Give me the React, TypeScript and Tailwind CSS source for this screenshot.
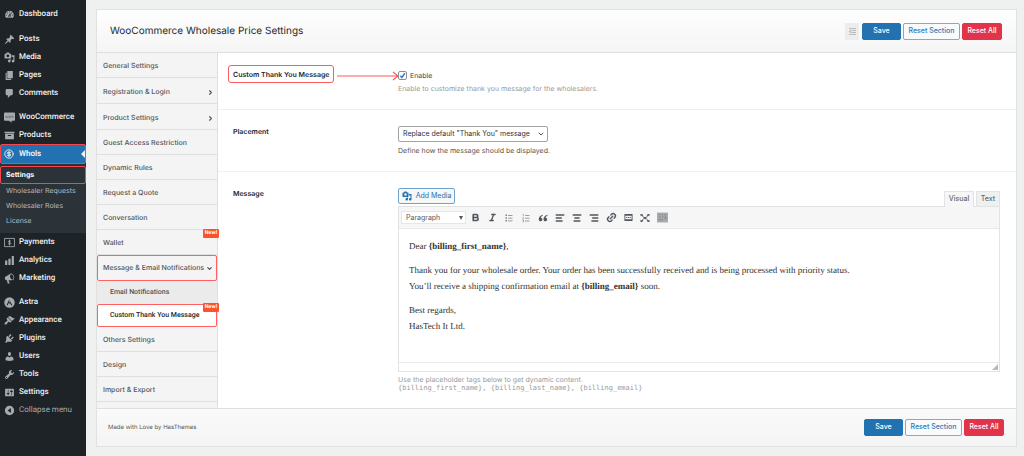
import React, { useState } from "react";
import {
  AlignCenter,
  AlignLeft,
  AlignRight,
  Bold,
  ChevronDown,
  ChevronRight,
  CircleDollarSign,
  Italic,
  Link2,
} from "lucide-react";

type IconProps = { className?: string };

function Glyph({ d, className = "size-[11px]" }: { d: string; className?: string }) {
  return (
    <svg viewBox="0 0 20 20" fill="currentColor" fillRule="evenodd" aria-hidden="true" className={className}>
      <path d={d} />
    </svg>
  );
}

const paths = {
  dashboard:
    "M3.76 16h12.48A7.998 7.998 0 0 0 10 3a7.998 7.998 0 0 0-6.24 13zM10 4c.55 0 1 .45 1 1s-.45 1-1 1-1-.45-1-1 .45-1 1-1zM6 6c.55 0 1 .45 1 1s-.45 1-1 1-1-.45-1-1 .45-1 1-1zm8 0c.55 0 1 .45 1 1s-.45 1-1 1-1-.45-1-1 .45-1 1-1zm-5.37 5.55L12 7v6c0 1.1-.9 2-2 2s-2-.9-2-2c0-.57.24-1.08.63-1.45zM4 10c.55 0 1 .45 1 1s-.45 1-1 1-1-.45-1-1 .45-1 1-1zm12 0c.55 0 1 .45 1 1s-.45 1-1 1-1-.45-1-1 .45-1 1-1zm-5 3c0-.55-.45-1-1-1s-1 .45-1 1 .45 1 1 1 1-.45 1-1z",
  post: "M10.44 3.02l1.82-1.82 6.36 6.35-1.83 1.82c-1.05-.68-2.48-.57-3.41.36l-.75.75c-.92.93-1.04 2.35-.35 3.41l-1.83 1.82-2.41-2.41-2.8 2.79c-.42.42-3.38 2.71-3.8 2.29s1.86-3.39 2.28-3.81l2.79-2.79L4.1 9.36l1.83-1.82c1.05.69 2.48.57 3.4-.36l.75-.75c.93-.92 1.05-2.35.36-3.41z",
  media:
    "M13 11V4c0-.55-.45-1-1-1h-1.67L9 1H5L3.67 3H2c-.55 0-1 .45-1 1v7c0 .55.45 1 1 1h10c.55 0 1-.45 1-1zM7 4.5c1.38 0 2.5 1.12 2.5 2.5S8.38 9.5 7 9.5 4.5 8.38 4.5 7 5.62 4.5 7 4.5zM14 6h5v10.5c0 1.38-1.12 2.5-2.5 2.5S14 17.88 14 16.5s1.12-2.5 2.5-2.5c.17 0 .34.02.5.05V9h-3V6zm-4 8.05V13h2v3.5c0 1.38-1.12 2.5-2.5 2.5S7 17.88 7 16.5 8.12 14 9.5 14c.17 0 .34.02.5.05z",
  page: "M6 15V2h10v13H6zm-1 1h8v2H3V5h2v11z",
  comments: "M5 2h9c1.1 0 2 .9 2 2v7c0 1.1-.9 2-2 2h-2l-5 5v-5H5c-1.1 0-2-.9-2-2V4c0-1.1.9-2 2-2z",
  products: "M19 3v3H1V3h18zM2 7h16v10H2V7zm11 4V9H7v2h6z",
  chart: "M18 18V2h-4v16h4zm-6 0V7H8v11h4zm-6 0v-8H2v8h4z",
  megaphone:
    "M18.15 5.94c.46 1.62.38 3.22-.02 4.48-.42 1.28-1.26 2.18-2.3 2.48-.3.08-.7.1-1.02.1H8.2l2.02 5.5c.02.14-.06.26-.14.34-.08.1-.24.16-.34.16H6.95c-.1 0-.26-.06-.34-.16-.08-.08-.16-.2-.14-.34l-1-5.5H4.25c-.5.04-1.1-.2-1.56-.64s-.88-1.08-1.06-1.88c-.24-.8-.2-1.56-.02-2.2.18-.62.58-1.08 1.06-1.3l9.02-5.42c.3-.2.6-.36.98-.46 1.04-.3 2.24.1 3.22.98s1.84 2.24 2.26 3.86zM15.4 11.9c1.3-.4 2-1.9 1.9-3.7-.1-3-2.2-6-4.3-5.9-1.4.2-2.2 2.1-1.9 4.5.4 3 2.500 5.500 4.300 5.100z",
  appearance:
    "M14.48 11.06L7.41 3.99l1.5-1.5c.5-.56 2.3-.47 3.51.32 1.21.8 1.43 1.28 2.91 2.1 1.18.64 2.45 1.26 4.45.85zm-.71.71L6.7 4.7 4.93 6.47c-.39.39-.39 1.02 0 1.41l1.06 1.06c.39.39.39 1.03 0 1.42-.6.6-1.43 1.11-2.21 1.69-.35.26-.7.53-1.01.84C1.43 14.23.4 16.08 1.4 17.07c.99 1 2.84-.03 4.18-1.36.31-.31.58-.66.85-1.02.57-.78 1.08-1.61 1.69-2.21.39-.39 1.02-.39 1.41 0l1.06 1.06c.39.39 1.02.39 1.41 0z",
  plugins:
    "M13.11 4.36L9.87 7.6 8 5.73l3.24-3.24c.35-.34 1.05-.2 1.56.32.52.51.66 1.21.31 1.55zm-8 1.77l.91-1.12 9.01 9.01-1.19.84c-.71.71-2.63 1.16-3.82 1.16H6.14L4.9 17.26c-.59.59-1.54.59-2.12 0-.59-.58-.59-1.53 0-2.12l1.24-1.24v-3.88c0-1.13.4-3.19 1.09-3.89zm7.26 3.97l3.24-3.24c.34-.35 1.04-.21 1.55.31.52.51.66 1.21.31 1.55l-3.24 3.25z",
  users:
    "M10 9.25c-2.27 0-2.73-3.44-2.73-3.44C7 4.02 7.82 2 9.97 2c2.16 0 2.98 2.02 2.71 3.81 0 0-.41 3.44-2.68 3.44zm0 2.57L12.72 10c2.39 0 4.52 2.33 4.52 4.53v2.49s-3.65 1.13-7.24 1.13c-3.65 0-7.24-1.13-7.24-1.13v-2.49c0-2.25 1.94-4.48 4.47-4.48z",
  tools:
    "M16.68 9.77c-1.34 1.34-3.3 1.67-4.95.99l-5.41 6.52c-.99.99-2.59.99-3.58 0s-.99-2.59 0-3.57l6.52-5.42c-.68-1.65-.35-3.61.99-4.95 1.28-1.28 3.12-1.62 4.72-1.06l-2.89 2.89 2.82 2.82 2.86-2.87c.53 1.58.18 3.39-1.08 4.65zM3.81 16.21c.4.39 1.04.39 1.43 0 .4-.4.4-1.04 0-1.43-.39-.4-1.03-.4-1.43 0-.39.39-.39 1.03 0 1.43z",
  settings:
    "M18 16V4c0-.55-.45-1-1-1H3c-.55 0-1 .45-1 1v12c0 .55.45 1 1 1h14c.55 0 1-.45 1-1zM8 11h1c.55 0 1 .45 1 1s-.45 1-1 1H8v1.5c0 .28-.22.5-.5.5s-.5-.22-.5-.5V13H6c-.55 0-1-.45-1-1s.45-1 1-1h1V5.5c0-.28.22-.5.5-.5s.5.22.5.5V11zm5-2h-1c-.55 0-1-.45-1-1s.45-1 1-1h1V5.5c0-.28.22-.5.5-.5s.5.22.5.5V7h1c.55 0 1 .45 1 1s-.45 1-1 1h-1v5.5c0 .28-.22.5-.5.5s-.5-.22-.5-.5V9z",
  collapse: "M10 1.500a8.500 8.500 0 1 0 0 17 8.500 8.500 0 0 0 0-17zM12.500 5.500v9L6.500 10z",
};

function WooIcon() {
  return (
    <svg viewBox="0 0 20 20" aria-hidden="true" className="size-[11px]">
      <path fill="currentColor" d="M1.500 1h17c.8 0 1.500.7 1.500 1.500v12c0 .8-.7 1.500-1.500 1.500h-5l.8 3.500L9 16H1.500C.7 16 0 15.300 0 14.500v-12C0 1.700.7 1 1.500 1z" />
      <path fill="none" stroke="#55595d" strokeWidth="1" d="M3 7l1 3.500L5.500 8l1.500 2.500 1-3.500M9.800 8.700a1.300 1.700 0 1 0 2.600 0 1.300 1.700 0 1 0-2.600 0M14.300 8.700a1.300 1.700 0 1 0 2.600 0 1.300 1.700 0 1 0-2.600 0" />
    </svg>
  );
}

function PaymentsIcon() {
  return (
    <svg viewBox="0 0 20 20" fill="none" stroke="currentColor" aria-hidden="true" className="size-[11px]">
      <path strokeWidth="1.600" d="M1 2.500h18v15H1z" />
      <path strokeWidth="1.600" d="M12.500 7.800C12 6.800 8 6.500 8 8.500s4.300 1 4.300 3.200-4 2-4.800.4M10 5v10" />
    </svg>
  );
}

function AstraIcon() {
  return (
    <svg viewBox="0 0 20 20" aria-hidden="true" className="size-[11px]">
      <circle cx="10" cy="10" r="9.500" fill="currentColor" />
      <path fill="#1d2327" d="M9.500 4.500L4.500 15h2l3.300-7zM10.800 7.500l-2 4.200 2.600 0L13 15h2.300z" />
    </svg>
  );
}

const g = (d: string) => <Glyph d={d} />;

function MenuItem({ icon, label, muted = false }: { icon: React.ReactNode; label: string; muted?: boolean }) {
  return (
    <li>
      <a href="#" className={`flex h-[18px] items-center gap-1 pl-[3px] ${muted ? "text-[#a7aaad]" : "font-medium text-[#f0f0f1]"}`}>
        <span className="flex w-[12px] shrink-0 justify-center text-[#a7aaad]">{icon}</span>
        {label}
      </a>
    </li>
  );
}

function Sidebar() {
  return (
    <aside className="w-[86px] shrink-0 bg-[#1d2327] pt-[5px] font-['Roboto','Liberation_Sans',sans-serif] text-[8px] leading-[10px]">
      <nav aria-label="Admin menu">
        <ul>
          <MenuItem icon={g(paths.dashboard)} label="Dashboard" />
        </ul>
        <ul className="mt-[7px]">
          <MenuItem icon={g(paths.post)} label="Posts" />
          <MenuItem icon={g(paths.media)} label="Media" />
          <MenuItem icon={g(paths.page)} label="Pages" />
          <MenuItem icon={g(paths.comments)} label="Comments" />
        </ul>
        <ul className="mt-1.5">
          <MenuItem icon={<WooIcon />} label="WooCommerce" />
          <MenuItem icon={g(paths.products)} label="Products" />
          <li>
            <a
              href="#"
              className="relative flex h-5 items-center gap-1 rounded-[2px] border border-[#f2474d] bg-[#2271b1] pl-[2px] font-medium text-white"
            >
              <span className="flex w-[12px] shrink-0 justify-center">
                <CircleDollarSign className="size-[10px]" strokeWidth={2} />
              </span>
              Whols
              <svg viewBox="0 0 4 8" aria-hidden="true" className="absolute top-[5px] right-0 h-2 w-1">
                <path d="M4 0v8L0 4z" fill="#f0f0f1" />
              </svg>
            </a>
            <ul className="bg-[#2c3338] pt-[2px] pb-1 font-['Inter','Liberation_Sans',sans-serif] text-[7px] text-[#b4b9be]">
              <li>
                <a href="#" className="flex h-[18px] items-center rounded-[2px] border border-[#f2474d] pl-[5px] font-bold text-white">
                  Settings
                </a>
              </li>
              {["Wholesaler Requests", "Wholesaler Roles", "License"].map((t) => (
                <li key={t}>
                  <a href="#" className="flex h-[15px] items-center pb-[2px] pl-1.5">
                    {t}
                  </a>
                </li>
              ))}
            </ul>
          </li>
          <MenuItem icon={<PaymentsIcon />} label="Payments" />
          <MenuItem icon={g(paths.chart)} label="Analytics" />
          <MenuItem icon={g(paths.megaphone)} label="Marketing" />
        </ul>
        <ul className="mt-1.5">
          <MenuItem icon={<AstraIcon />} label="Astra" />
          <MenuItem icon={g(paths.appearance)} label="Appearance" />
          <MenuItem icon={g(paths.plugins)} label="Plugins" />
          <MenuItem icon={g(paths.users)} label="Users" />
          <MenuItem icon={g(paths.tools)} label="Tools" />
          <MenuItem icon={g(paths.settings)} label="Settings" />
          <MenuItem icon={g(paths.collapse)} label="Collapse menu" muted />
        </ul>
      </nav>
    </aside>
  );
}

function Actions() {
  return (
    <div className="flex gap-0.5 text-[7px] font-medium">
      <button type="button" className="h-[17px] w-[39px] rounded-[2px] border border-[#2271b1] bg-[#2271b1] text-white">
        Save
      </button>
      <button type="button" className="h-[17px] w-[57px] rounded-[2px] border border-[#7fabd0] bg-[#f8fafc] whitespace-nowrap text-[#2f79b5]">
        Reset Section
      </button>
      <button type="button" className="h-[17px] w-10 rounded-[2px] border border-[#e1344a] bg-[#e1344a] whitespace-nowrap text-white">
        Reset All
      </button>
    </div>
  );
}

function NewBadge() {
  return (
    <span className="absolute -top-px -right-[2px] flex h-[9px] w-4 items-center justify-center rounded-[1px] bg-[#fb5429] text-[5px] font-bold text-white">
      New!
    </span>
  );
}

function NavRow({ label, open, arrow, badge }: { label: string; open?: boolean; arrow?: boolean; badge?: boolean }) {
  const tall = arrow || open ? "h-[26px]" : "h-[25px]";
  const edge = open ? "rounded-[2px] border border-[#ff6163] pt-px pl-[5px]" : "border-b border-[#dfdfdf] pt-[3px] pl-1.5";
  return (
    <li className="relative">
      <a href="#" className={`flex items-center justify-between pr-[3px] whitespace-nowrap ${tall} ${edge}`}>
        {label}
        {arrow && <ChevronRight className="size-[7px]" strokeWidth={4} />}
        {open && <ChevronDown className="size-[7px]" strokeWidth={4} />}
      </a>
      {badge && <NewBadge />}
    </li>
  );
}

function SectionNav() {
  return (
    <nav aria-label="Sections" className="w-[121px] shrink-0 border-r border-[#dfdfdf] bg-[#f4f4f4] text-[7px] font-medium text-[#50555a]">
      <ul>
        <NavRow label="General Settings" />
        <NavRow label="Registration & Login" arrow />
        <NavRow label="Product Settings" arrow />
        <NavRow label="Guest Access Restriction" />
        <NavRow label="Dynamic Rules" />
        <NavRow label="Request a Quote" />
        <NavRow label="Conversation" />
        <NavRow label="Wallet" badge />
        <NavRow label="Message & Email Notifications" open />
        <li>
          <a href="#" className="flex h-[23px] items-center bg-[#ebebeb] pl-[13px] font-['Roboto','Liberation_Sans',sans-serif]">
            Email Notifications
          </a>
        </li>
        <li className="relative">
          <a
            href="#"
            className="flex h-[23px] items-center rounded-[2px] border border-[#ff6163] bg-white pl-3 font-['Roboto','Liberation_Sans',sans-serif] whitespace-nowrap text-[#23282d]"
          >
            Custom Thank You Message
          </a>
          <NewBadge />
        </li>
        <NavRow label="Others Settings" />
        <NavRow label="Design" />
        <NavRow label="Import & Export" />
      </ul>
    </nav>
  );
}

function ListIcon({ className }: IconProps) {
  return (
    <svg viewBox="0 0 20 20" fill="currentColor" aria-hidden="true" className={className}>
      <path d="M3 3h3v3H3zM8 4h9v1.500H8zM3 8.500h3v3H3zM8 9.500h9V11H8zM3 14h3v3H3zM8 15h9v1.500H8z" />
    </svg>
  );
}

function NumberedIcon({ className }: IconProps) {
  return (
    <svg viewBox="0 0 20 20" fill="none" stroke="currentColor" aria-hidden="true" className={className}>
      <path strokeWidth="1.500" d="M8 5h9M8 10.500h9M8 16h9" />
      <path strokeWidth="1.100" d="M3.500 2.800L4.500 2v4.500M3 9h2v1.300L3 12h2.300M3 14h2v4H3M3.500 16H5" />
    </svg>
  );
}

function QuoteIcon({ className }: IconProps) {
  return (
    <Glyph
      className={className}
      d="M9.300 3.500C4.500 5 1.500 8.500 1.500 12.300c0 2.500 1.500 4.200 3.800 4.200 2 0 3.500-1.500 3.500-3.500S7.500 9.700 5.700 9.500c.3-1.800 1.700-3.300 4-4.500zM18.800 3.500c-4.800 1.500-7.800 5-7.800 8.800 0 2.500 1.500 4.200 3.800 4.200 2 0 3.500-1.500 3.500-3.500S17 9.700 15.200 9.500c.3-1.800 1.700-3.300 4-4.500z"
    />
  );
}

function MoreIcon({ className }: IconProps) {
  return <Glyph className={className} d="M1 2h18v4H1zM1 14h18v4H1zM1 6h2v8H1zM17 6h2v8h-2zM5 9h2.500v2H5zM8.800 9h2.500v2H8.800zM12.500 9H15v2h-2.500z" />;
}

function FullscreenIcon({ className }: IconProps) {
  return (
    <svg viewBox="0 0 20 20" fill="currentColor" aria-hidden="true" className={className}>
      <path d="M1 2h5L4.500 3.500l3 3L6 8 3 5 1 7zM19 2v5l-2-2-3 3-1.500-1.500 3-3L14 2zM1 18v-5l2 2 3-3 1.500 1.500-3 3L6 18zM19 18h-5l1.500-1.500-3-3L14 12l3 3 2-2zM7 8h6v4H7z" />
    </svg>
  );
}

function KitchenSinkIcon({ className }: IconProps) {
  return (
    <svg viewBox="0 0 20 20" aria-hidden="true" className={className}>
      <rect x="0" y="1" width="20" height="18" fill="#a9abad" />
      <path fill="#85898c" d="M3 4h3v2H3zM8 4h3v2H8zM13 4h4v2h-4zM3 8h4v2H3zM9 8h3v2H9zM14 8h3v5h-3zM3 13h8v2H3z" />
    </svg>
  );
}

const tools: { label: string; icon: React.ReactNode }[] = [
  { label: "Bold", icon: <Bold className="size-[9px]" strokeWidth={4.5} /> },
  { label: "Italic", icon: <Italic className="size-[9px]" strokeWidth={3.5} /> },
  { label: "Bulleted list", icon: <ListIcon className="size-[10px] text-[#7e8185]" /> },
  { label: "Numbered list", icon: <NumberedIcon className="size-[10px] text-[#7e8185]" /> },
  { label: "Blockquote", icon: <QuoteIcon className="size-[10px]" /> },
  { label: "Align left", icon: <AlignLeft className="size-[10px]" strokeWidth={3.5} /> },
  { label: "Align center", icon: <AlignCenter className="size-[10px]" strokeWidth={3.5} /> },
  { label: "Align right", icon: <AlignRight className="size-[10px]" strokeWidth={3.5} /> },
  { label: "Insert link", icon: <Link2 className="size-[11px] -rotate-45" strokeWidth={3} /> },
  { label: "Read more", icon: <MoreIcon className="size-[9px]" /> },
  { label: "Fullscreen", icon: <FullscreenIcon className="size-[10px]" /> },
  { label: "Toolbar toggle", icon: <KitchenSinkIcon className="size-[11px]" /> },
];

function Editor() {
  return (
    <div>
      <div className="flex items-end justify-between">
        <button
          type="button"
          className="mb-[2px] flex h-4 w-[57px] items-center justify-center gap-1 rounded-[2px] border border-[#6ea3cd] bg-[#f6f7f7] text-[7px] whitespace-nowrap text-[#2271b1]"
        >
          <Glyph d={paths.media} className="size-[10px] shrink-0" />
          Add Media
        </button>
        <div role="tablist" className="z-10 -mb-px flex gap-0.5 text-[7px] font-medium text-[#646970]">
          <button role="tab" type="button" aria-selected="true" className="h-4 w-[30px] border border-b-0 border-[#e2e3e5] bg-[#f6f6f6]">
            Visual
          </button>
          <button role="tab" type="button" aria-selected="false" className="h-4 w-6 border border-[#e2e3e5] bg-[#eff0f1]">
            Text
          </button>
        </div>
      </div>
      <div className="border border-[#e2e3e5] bg-white">
        <div className="flex h-[22px] items-center border-b border-[#e8e9ea] bg-[#f6f6f6] pl-[2px]">
          <div className="relative mr-[2px]">
            <select
              aria-label="Block format"
              className="block h-[13px] w-[65px] appearance-none border border-[#e6e6e6] bg-white pl-1 text-[7px] leading-[10px] text-[#595959]"
            >
              <option>Paragraph</option>
            </select>
            <svg viewBox="0 0 4 4" aria-hidden="true" className="pointer-events-none absolute top-[5px] right-[3px] size-1 fill-[#50575e]">
              <path d="M0 0h4L2 4z" />
            </svg>
          </div>
          <div className="flex gap-[3px] text-[#50575e]">
            {tools.map((t) => (
              <button key={t.label} type="button" aria-label={t.label} className="flex h-[14px] w-[14px] items-center justify-center">
                {t.icon}
              </button>
            ))}
          </div>
        </div>
        <div
          role="textbox"
          aria-label="Message"
          aria-multiline="true"
          contentEditable
          suppressContentEditableWarning
          className="min-h-[133px] space-y-2 px-[10px] py-[9px] font-['Liberation_Serif',serif] text-[9px] leading-[16px] text-[#333]"
        >
          <p>
            Dear <strong>{"{billing_first_name}"}</strong>,
          </p>
          <p>
            Thank you for your wholesale order. Your order has been successfully received and is being processed with priority status.
            <br />
            You’ll receive a shipping confirmation email at <strong>{"{billing_email}"}</strong> soon.
          </p>
          <p>
            Best regards,
            <br />
            HasTech It Ltd.
          </p>
        </div>
        <div className="flex h-[9px] items-end justify-end border-t border-[#e8e9ea] p-px">
          <svg viewBox="0 0 6 6" aria-hidden="true" className="size-1.5 fill-[#b8babd]">
            <path d="M6 0v6H0z" />
          </svg>
        </div>
      </div>
    </div>
  );
}

function Field({ label, children, className }: { label: React.ReactNode; children: React.ReactNode; className: string }) {
  return (
    <div className={`flex pr-4 pl-[15px] ${className}`}>
      <div className="w-[165px] shrink-0 text-[7px] leading-[11px] font-semibold whitespace-nowrap text-[#23282d]">{label}</div>
      <div className="min-w-0 flex-1">{children}</div>
    </div>
  );
}

export default function App() {
  const [enabled, setEnabled] = useState(true);
  return (
    <div className="flex min-h-screen bg-[#eff1f1] font-['Inter','Liberation_Sans',sans-serif] [text-rendering:geometricPrecision]">
      <Sidebar />
      <main className="min-w-0 flex-1 pt-[9px] pr-[7px] pb-2 pl-[10px]">
        <form className="border border-[#e0e2e2] bg-white" onSubmit={(e) => e.preventDefault()}>
          <header className="flex h-[43px] items-center justify-between border-b border-[#dfdfdf] bg-linear-to-b from-[#fefefe] to-[#f5f5f5] pr-3.5 pl-[13px]">
            <h1 className="text-[10px] leading-[14px] text-[#23282d]">WooCommerce Wholesale Price Settings</h1>
            <div className="flex gap-[3px]">
              <button type="button" aria-label="Expand all options" className="flex h-[17px] w-3.5 items-center justify-center bg-[#ededed] text-[#a2a4a6]">
                <svg viewBox="0 0 12 12" fill="none" stroke="currentColor" strokeWidth="1.2" className="size-[7px]" aria-hidden="true">
                  <path d="M0 1h12M5 4.300h7M5 7.700h7M0 11h12M3 3.500v5L0.500 6z" />
                </svg>
              </button>
              <Actions />
            </div>
          </header>
          <div className="flex">
            <SectionNav />
            <div className="min-w-0 flex-1">
              <Field
                className="border-b border-[#f0f0f0] pt-[17px] pb-[15px]"
                label={
                  <div className="relative">
                    <label
                      htmlFor="enable"
                      className="-mt-[5px] -ml-[5px] flex h-[18px] w-[106px] items-center rounded-[3px] border border-[#ff5a5c] pl-1"
                    >
                      Custom Thank You Message
                    </label>
                    <svg viewBox="0 0 62 10" fill="none" stroke="#ff5a5c" aria-hidden="true" className="absolute top-[6px] left-[104px] h-[10px] w-[62px]">
                      <path d="M0 5h61M56 1l5 4-5 4" strokeWidth="1.200" />
                    </svg>
                  </div>
                }
              >
                <div className="flex items-center gap-[3px]">
                  <span className="relative flex">
                    <input
                      id="enable"
                      type="checkbox"
                      checked={enabled}
                      onChange={(e) => setEnabled(e.target.checked)}
                      className="size-[9px] appearance-none rounded-[2px] border border-[#8c8f94] bg-white"
                    />
                    {enabled && (
                      <svg viewBox="0 0 9 9" fill="none" stroke="#3582c4" strokeWidth="1.500" aria-hidden="true" className="pointer-events-none absolute inset-0 size-[9px]">
                        <path d="M2.300 4.700l1.600 1.800L6.800 2.300" />
                      </svg>
                    )}
                  </span>
                  <label htmlFor="enable" className="text-[7px] leading-[11px] text-[#444]">
                    Enable
                  </label>
                </div>
                <p className="mt-[3px] text-[7px] leading-[10px] text-[#999]">Enable to customize thank you message for the wholesalers.</p>
              </Field>
              <Field className="border-b border-[#f0f0f0] pt-4 pb-[15px]" label={<label htmlFor="placement">Placement</label>}>
                <div className="relative w-[150px]">
                  <select
                    id="placement"
                    className="block h-4 w-full appearance-none rounded-[2px] border border-[#a0a3a7] bg-white pl-1 text-[7px] leading-[10px] text-[#2c3338]"
                  >
                    <option>Replace default "Thank You" message</option>
                  </select>
                  <ChevronDown className="pointer-events-none absolute top-1 right-[3px] size-2 text-[#50575e]" strokeWidth={3} />
                </div>
                <p className="mt-[3px] text-[7px] leading-[11px] text-[#555]">Define how the message should be displayed.</p>
              </Field>
              <Field className="pt-4 pb-[15px]" label="Message">
                <Editor />
                <div className="mt-[3px] text-[7px] leading-[9px] text-[#999]">
                  <p>Use the placeholder tags below to get dynamic content.</p>
                  <p className="font-['DejaVu_Sans_Mono',monospace]">{"{billing_first_name}, {billing_last_name}, {billing_email}"}</p>
                </div>
              </Field>
            </div>
          </div>
          <footer className="flex h-[38px] items-center justify-between border-t border-[#dfdfdf] bg-linear-to-b from-[#fafafa] to-[#f4f4f4] pr-3 pl-[11px]">
            <p className="text-[6px] leading-[10px] text-[#555]">Made with Love by HasThemes</p>
            <Actions />
          </footer>
        </form>
      </main>
    </div>
  );
}
